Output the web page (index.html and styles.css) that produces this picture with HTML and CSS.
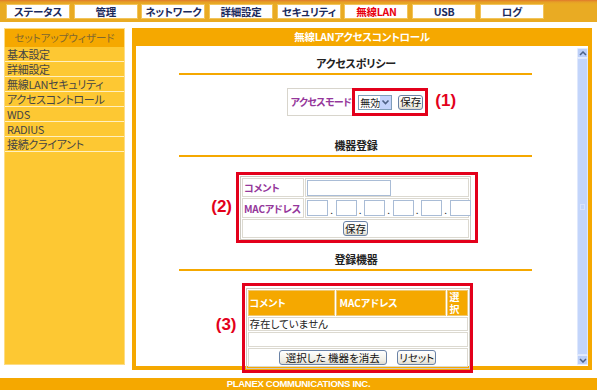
FILE: index.html
```html
<!DOCTYPE html>
<html lang="ja">
<head>
<meta charset="utf-8">
<title>無線LANアクセスコントロール</title>
<link rel="stylesheet" href="styles.css">
</head>
<body>
<div class="page">
  <nav class="topbar">
    <a class="tab">ステータス</a>
    <a class="tab">管理</a>
    <a class="tab">ネットワーク</a>
    <a class="tab">詳細設定</a>
    <a class="tab">セキュリティ</a>
    <a class="tab tab-active">無線LAN</a>
    <a class="tab">USB</a>
    <a class="tab">ログ</a>
  </nav>
  <div class="main">
    <aside class="side">
      <div class="side-head">セットアップウィザード</div>
      <ul class="side-list">
        <li>基本設定</li>
        <li>詳細設定</li>
        <li>無線LANセキュリティ</li>
        <li>アクセスコントロール</li>
        <li>WDS</li>
        <li>RADIUS</li>
        <li>接続クライアント</li>
      </ul>
    </aside>
    <section class="panel">
      <h1 class="panel-head">無線LANアクセスコントロール</h1>
      <div class="frame">
        <div class="content">
          <h2 class="sec-title first">アクセスポリシー</h2>
          <div class="rule"></div>
          <div class="center mode-wrap">
            <div class="mode-row">
              <span class="label mode-label">アクセスモード</span>
              <span class="mark1">
                <span class="select">
                  <span class="select-val">無効</span>
                  <span class="select-arrow">
                    <svg width="9" height="6" viewBox="0 0 9 6"><path d="M1.5 1.5 L4.5 4.5 L7.5 1.5" fill="none" stroke="#4d6185" stroke-width="1.6"/></svg>
                  </span>
                </span>
                <button class="btn btn-save">保存</button>
                <span class="note note1">(1)</span>
              </span>
            </div>
          </div>

          <h2 class="sec-title second">機器登録</h2>
          <div class="rule"></div>
          <div class="center">
            <div class="mark2">
              <span class="note note2">(2)</span>
              <table class="reg">
                <tr class="r1">
                  <td class="lab"><span class="label">コメント</span></td>
                  <td class="val"><span class="input input-comment"></span></td>
                </tr>
                <tr class="r2">
                  <td class="lab"><span class="label">MACアドレス</span></td>
                  <td class="val">
                    <span class="mac">
                      <span class="input input-mac"></span><span class="dot">.</span>
                      <span class="input input-mac"></span><span class="dot">.</span>
                      <span class="input input-mac"></span><span class="dot">.</span>
                      <span class="input input-mac"></span><span class="dot">.</span>
                      <span class="input input-mac"></span><span class="dot">.</span>
                      <span class="input input-mac"></span>
                    </span>
                  </td>
                </tr>
                <tr class="r3">
                  <td colspan="2" class="btn-cell"><button class="btn btn-save2">保存</button></td>
                </tr>
              </table>
            </div>
          </div>

          <h2 class="sec-title third">登録機器</h2>
          <div class="rule"></div>
          <div class="center">
            <div class="mark3">
              <span class="note note3">(3)</span>
              <table class="list">
                <tr class="lh">
                  <th class="c1">コメント</th>
                  <th class="c2">MACアドレス</th>
                  <th class="c3">選<br>択</th>
                </tr>
                <tr class="lr1"><td colspan="3">存在していません</td></tr>
                <tr class="lr2"><td colspan="3"></td></tr>
                <tr class="lr3">
                  <td colspan="3" class="btn-cell">
                    <button class="btn btn-del">選択した 機器を消去</button>
                    <button class="btn btn-reset">リセット</button>
                  </td>
                </tr>
              </table>
            </div>
          </div>
        </div>
        <div class="scrollbar">
          <span class="sb-btn">
            <svg width="8" height="5" viewBox="0 0 8 5"><path d="M1 4 L4 1 L7 4" fill="none" stroke="#4d6185" stroke-width="1.5"/></svg>
          </span>
          <span class="sb-thumb"><span class="grip"></span></span>
          <span class="sb-btn">
            <svg width="8" height="5" viewBox="0 0 8 5"><path d="M1 1 L4 4 L7 1" fill="none" stroke="#4d6185" stroke-width="1.5"/></svg>
          </span>
        </div>
      </div>
    </section>
  </div>
  <footer class="footer">PLANEX COMMUNICATIONS INC.</footer>
</div>
</body>
</html>
```

FILE: styles.css
```css
* { box-sizing: border-box; }

body {
  margin: 0;
  background: #ffffff;
  font-family: "Noto Sans CJK JP", "Noto Sans", sans-serif;
  font-size: 11px;
  line-height: 12px;
  font-feature-settings: "palt";
  color: #222;
}

.page {
  width: 597px;
}

/* top navigation */
.topbar {
  height: 22px;
  background: linear-gradient(#e0782c 0, #e6a026 2px, #e9ab23 4px, #e9ab23 100%);
  display: flex;
  gap: 3.7px;
  padding: 4px 0 0 6px;
}

.tab {
  width: 64px;
  height: 15px;
  background: #ffffff;
  border: 1px solid #f2c45a;
  color: #1b2a5c;
  font-size: 10.5px;
  font-weight: bold;
  line-height: 13px;
  text-align: center;
  white-space: nowrap;
  letter-spacing: -0.2px;
}

.tab-active {
  color: #e8000f;
}

/* layout */
.main {
  display: flex;
  align-items: flex-start;
  gap: 7px;
  padding: 6px 0 0 4px;
}

/* sidebar */
.side {
  width: 121px;
  height: 337px;
  flex: none;
  background: #fdc833;
  border: 1px solid #fddc84;
}

.side-head {
  height: 18px;
  background: #f5a800;
  color: #80672f;
  font-size: 10.5px;
  line-height: 18px;
  text-align: center;
  white-space: nowrap;
}

.side-list {
  list-style: none;
  margin: 0;
  padding: 0;
}

.side-list li {
  height: 15px;
  line-height: 14px;
  padding-left: 2px;
  color: #454545;
  font-size: 11px;
  letter-spacing: -0.3px;
  white-space: nowrap;
  border-bottom: 1px solid #fff0c0;
}

/* main panel */
.panel {
  width: 460px;
  height: 342px;
  flex: none;
  background: #f5a800;
  padding: 0 4px 4px 4px;
  display: flex;
  flex-direction: column;
}

.panel-head {
  margin: 0;
  height: 18px;
  line-height: 18px;
  color: #ffffff;
  font-size: 10.5px;
  font-weight: bold;
  letter-spacing: -0.3px;
  text-align: center;
  white-space: nowrap;
}

.frame {
  height: 320px;
  background: #ffffff;
  display: flex;
}

.content {
  width: 440px;
  display: flex;
  flex-direction: column;
}

/* scrollbar */
.scrollbar {
  width: 11px;
  margin: 2px 0 1px 1px;
  display: flex;
  flex-direction: column;
}

.sb-btn {
  height: 10px;
  background: #bccff8;
  border: 1px solid #e3ebfd;
  border-radius: 1px;
  display: flex;
  align-items: center;
  justify-content: center;
}

.sb-thumb {
  flex: 1;
  background: #c3d5fb;
  border: 1px solid #dfe8fd;
  display: flex;
  align-items: center;
  justify-content: center;
}

.grip {
  width: 5px;
  height: 6px;
  border: 1px solid #d8e3fd;
}

/* sections */
.sec-title {
  margin: 0;
  font-size: 11px;
  font-weight: bold;
  line-height: 16px;
  letter-spacing: -0.2px;
  text-align: center;
  color: #222;
  white-space: nowrap;
}

.sec-title.first { margin-top: 9px; }
.sec-title.second { margin-top: 21px; }
.sec-title.third { margin-top: 8px; }

.rule {
  margin: 2px 44px 0 43px;
  border-top: 2px solid #f5a800;
}

.center {
  display: flex;
  justify-content: center;
}

.label {
  color: #95379b;
  font-size: 10px;
  font-weight: bold;
  line-height: 12px;
  white-space: nowrap;
  letter-spacing: -0.2px;
}

/* access mode */
.mode-wrap { margin-top: 13px; }

.mode-row {
  height: 28px;
  border: 1px solid #d8d5cc;
  display: flex;
  align-items: center;
  padding-left: 3px;
  margin-left: 1px;
}

.mode-label {
  flex: none;
  letter-spacing: -0.6px;
  margin-right: 4px;
}

.mark1 {
  position: relative;
  flex: none;
  height: 22px;
  display: flex;
  align-items: center;
  padding: 0 2px 0 3px;
  outline: 3px solid #e3001b;
}

.select {
  width: 34px;
  height: 15px;
  border: 1px solid #7f9db9;
  display: flex;
  background: #ffffff;
}

.select-val {
  flex: 1;
  font-size: 10px;
  line-height: 13px;
  padding-left: 1px;
  white-space: nowrap;
  overflow: hidden;
}

.select-arrow {
  width: 11px;
  flex: none;
  background: #c3d3fb;
  display: flex;
  align-items: center;
  justify-content: center;
}

.btn {
  font-family: "Noto Sans CJK JP", "Noto Sans", sans-serif;
  font-feature-settings: "palt";
  font-size: 10.5px;
  line-height: 12px;
  color: #111;
  height: 15px;
  padding: 0;
  border: 1px solid #6a82a6;
  border-radius: 3px;
  background: linear-gradient(#ffffff, #f1efe6 70%, #dedbd0);
  white-space: nowrap;
  vertical-align: middle;
}

.btn-save {
  width: 25px;
  margin-left: 6px;
}

.note {
  position: absolute;
  font-family: "Liberation Sans", Arial, sans-serif;
  font-size: 17px;
  font-weight: bold;
  line-height: 20px;
  color: #e3001b;
  white-space: nowrap;
}

.note1 {
  left: calc(100% + 10px);
  top: 0;
}

/* registration table */
.mark2 {
  position: relative;
  margin-top: 15px;
  margin-left: 2px;
  border: 3px solid #e3001b;
  padding: 1px 4px 0 1px;
}

.note2 {
  right: calc(100% + 7px);
  top: 22px;
}

.reg, .list {
  border-collapse: separate;
  border-spacing: 1px;
  border: 1px solid #ccc9c0;
  table-layout: fixed;
}

.reg {
  width: 231px;
  height: 64px;
}

.reg td, .list td {
  border: 1px solid #dcd9d0;
  padding: 0;
  line-height: 12px;
}

.reg .lab {
  width: 62px;
  padding-left: 1px;
}

.reg .r1 td { height: 19px; }
.reg .r2 td { height: 20px; }
.reg .r3 td { height: 19px; }

.reg .val {
  padding-left: 1px;
}

.input {
  display: inline-block;
  vertical-align: middle;
  height: 16px;
  border: 1px solid #a9bcd6;
  background: #ffffff;
}

.input-comment {
  width: 84px;
}

.mac {
  display: flex;
  align-items: center;
}

.input-mac {
  width: 21px;
  flex: none;
}

.dot {
  width: 7.5px;
  flex: none;
  text-align: center;
  font-size: 10px;
  line-height: 12px;
  padding-top: 4px;
}

.btn-cell {
  text-align: center;
}

.btn-save2 {
  width: 25px;
}

/* list table */
.mark3 {
  position: relative;
  margin-top: 12px;
  margin-left: 2px;
  border: 3px solid #e3001b;
  padding: 2px 0 1px 1px;
}

.note3 {
  right: calc(100% + 8px);
  top: 29px;
}

.list {
  width: 221px;
  height: 76px;
}

.list th {
  background: #f5a800;
  color: #ffffff;
  font-size: 10px;
  font-weight: bold;
  line-height: 12px;
  text-align: left;
  padding: 0 0 0 1px;
  border: 1px solid #f0c870;
  height: 25px;
  white-space: nowrap;
}

.list .c1 { width: 87px; }
.list .c2 { width: 110px; padding-left: 3px; }
.list .c3 { width: 21px; padding-left: 2px; }

.list .lr1 td {
  height: 14px;
  font-size: 10.5px;
  color: #222;
  padding-left: 1px;
  white-space: nowrap;
}

.list .lr2 td { height: 15px; }
.list .lr3 td { height: 19px; }

.btn-del {
  width: 108px;
}

.btn-reset {
  width: 39px;
  margin-left: 8px;
}

/* footer */
.footer {
  margin-top: 8px;
  height: 12px;
  background: #f5a800;
  color: #ffffff;
  font-family: "Liberation Sans", Arial, sans-serif;
  font-size: 9.5px;
  font-weight: bold;
  line-height: 12px;
  text-align: center;
  letter-spacing: -0.3px;
}
```
